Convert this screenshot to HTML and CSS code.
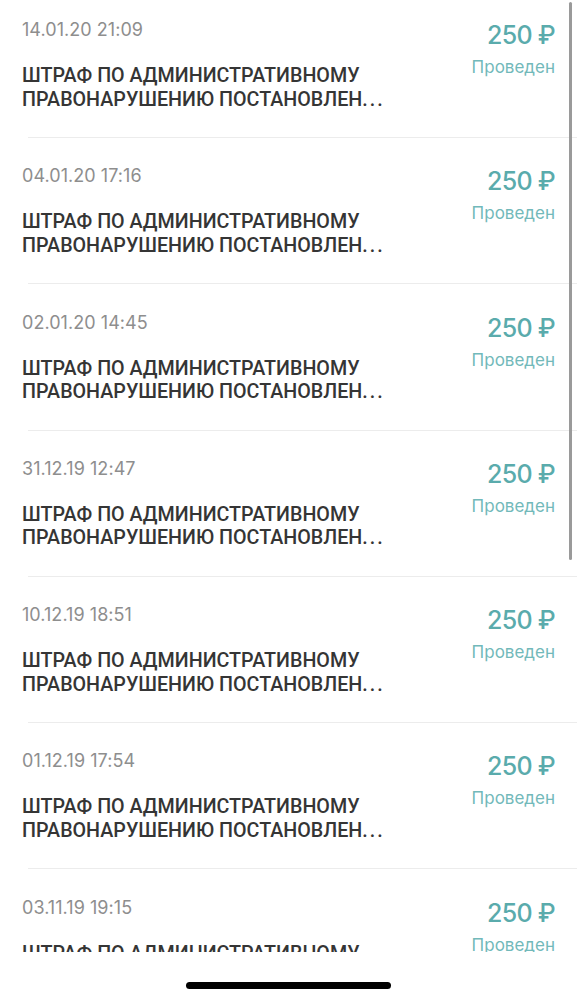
FILE: index.html
```html
<!DOCTYPE html>
<html lang="ru">
<head>
<meta charset="utf-8">
<link rel="stylesheet" href="styles.css">
</head>
<body>
<div class="screen">
  <div class="list">
    <div class="item">
      <div class="row">
        <div class="left">
          <div class="date">14.01.20 21:09</div>
          <div class="title">ШТРАФ ПО АДМИНИСТРАТИВНОМУ<br>ПРАВОНАРУШЕНИЮ ПОСТАНОВЛЕН<span class="dots">...</span></div>
        </div>
        <div class="right">
          <div class="amount">250 ₽</div>
          <div class="status">Проведен</div>
        </div>
      </div>
      <div class="sep"></div>
    </div>
    <div class="item">
      <div class="row">
        <div class="left">
          <div class="date">04.01.20 17:16</div>
          <div class="title">ШТРАФ ПО АДМИНИСТРАТИВНОМУ<br>ПРАВОНАРУШЕНИЮ ПОСТАНОВЛЕН<span class="dots">...</span></div>
        </div>
        <div class="right">
          <div class="amount">250 ₽</div>
          <div class="status">Проведен</div>
        </div>
      </div>
      <div class="sep"></div>
    </div>
    <div class="item">
      <div class="row">
        <div class="left">
          <div class="date">02.01.20 14:45</div>
          <div class="title">ШТРАФ ПО АДМИНИСТРАТИВНОМУ<br>ПРАВОНАРУШЕНИЮ ПОСТАНОВЛЕН<span class="dots">...</span></div>
        </div>
        <div class="right">
          <div class="amount">250 ₽</div>
          <div class="status">Проведен</div>
        </div>
      </div>
      <div class="sep"></div>
    </div>
    <div class="item">
      <div class="row">
        <div class="left">
          <div class="date">31.12.19 12:47</div>
          <div class="title">ШТРАФ ПО АДМИНИСТРАТИВНОМУ<br>ПРАВОНАРУШЕНИЮ ПОСТАНОВЛЕН<span class="dots">...</span></div>
        </div>
        <div class="right">
          <div class="amount">250 ₽</div>
          <div class="status">Проведен</div>
        </div>
      </div>
      <div class="sep"></div>
    </div>
    <div class="item">
      <div class="row">
        <div class="left">
          <div class="date">10.12.19 18:51</div>
          <div class="title">ШТРАФ ПО АДМИНИСТРАТИВНОМУ<br>ПРАВОНАРУШЕНИЮ ПОСТАНОВЛЕН<span class="dots">...</span></div>
        </div>
        <div class="right">
          <div class="amount">250 ₽</div>
          <div class="status">Проведен</div>
        </div>
      </div>
      <div class="sep"></div>
    </div>
    <div class="item">
      <div class="row">
        <div class="left">
          <div class="date">01.12.19 17:54</div>
          <div class="title">ШТРАФ ПО АДМИНИСТРАТИВНОМУ<br>ПРАВОНАРУШЕНИЮ ПОСТАНОВЛЕН<span class="dots">...</span></div>
        </div>
        <div class="right">
          <div class="amount">250 ₽</div>
          <div class="status">Проведен</div>
        </div>
      </div>
      <div class="sep"></div>
    </div>
    <div class="item">
      <div class="row">
        <div class="left">
          <div class="date">03.11.19 19:15</div>
          <div class="title">ШТРАФ ПО АДМИНИСТРАТИВНОМУ<br>ПРАВОНАРУШЕНИЮ ПОСТАНОВЛЕН<span class="dots">...</span></div>
        </div>
        <div class="right">
          <div class="amount">250 ₽</div>
          <div class="status">Проведен</div>
        </div>
      </div>
      <div class="sep"></div>
    </div>
    <div class="scrollbar"></div>
  </div>
  <div class="bottom">
    <div class="home"></div>
  </div>
</div>
</body>
</html>
```
FILE: styles.css
```css
* { box-sizing: border-box; }
html, body { margin: 0; padding: 0; background: #fff; }
.screen {
  width: 577px;
  height: 1000px;
  display: flex;
  flex-direction: column;
  font-family: Inter, "Noto Sans", sans-serif;
}
.list {
  position: relative;
  height: 952px;
  overflow: hidden;
  flex: none;
}
.item {
  height: 146.3px;
  display: flex;
  flex-direction: column;
}
.row {
  flex: 1;
  display: flex;
  justify-content: space-between;
  padding: 18px 22px 0 22px;
}
.date {
  font-size: 18px;
  color: #8e8e8e;
  line-height: 24px;
  letter-spacing: 0.05px;
}
.title {
  margin-top: 22px;
  font-family: Roboto, "Noto Sans", sans-serif;
  font-size: 19.7px;
  font-weight: 500;
  color: #353535;
  line-height: 23.5px;
}
.dots {
  letter-spacing: 2px;
}
.right {
  display: flex;
  flex-direction: column;
  align-items: flex-end;
}
.amount {
  font-size: 25px;
  font-weight: 500;
  color: #5aabac;
  line-height: 30px;
  margin-top: 2px;
  letter-spacing: -0.7px;
}
.status {
  font-size: 17px;
  color: #72b9ba;
  line-height: 22px;
  margin-top: 6px;
}
.sep {
  height: 1px;
  background: #ececec;
  margin-left: 28px;
  margin-bottom: 8.3px;
  flex: none;
}
.scrollbar {
  position: absolute;
  top: 2px;
  left: 569px;
  width: 3px;
  height: 558px;
  border-radius: 2px;
  background: #9a9a9a;
}
.bottom {
  flex: 1;
  display: flex;
  justify-content: center;
  padding-top: 30px;
}
.home {
  width: 205px;
  height: 7px;
  border-radius: 4px;
  background: #000;
}
```
